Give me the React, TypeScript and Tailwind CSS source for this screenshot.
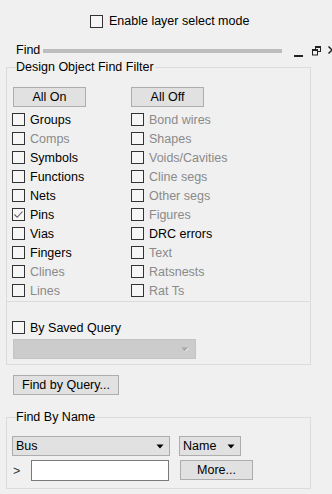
type Item = { label: string; on?: boolean; checked?: boolean };

const left: Item[] = [
  { label: "Groups", on: true },
  { label: "Comps" },
  { label: "Symbols", on: true },
  { label: "Functions", on: true },
  { label: "Nets", on: true },
  { label: "Pins", on: true, checked: true },
  { label: "Vias", on: true },
  { label: "Fingers", on: true },
  { label: "Clines" },
  { label: "Lines" },
];

const right: Item[] = [
  { label: "Bond wires" },
  { label: "Shapes" },
  { label: "Voids/Cavities" },
  { label: "Cline segs" },
  { label: "Other segs" },
  { label: "Figures" },
  { label: "DRC errors", on: true },
  { label: "Text" },
  { label: "Ratsnests" },
  { label: "Rat Ts" },
];

function Box({ on = true, checked = false }: { on?: boolean; checked?: boolean }) {
  return (
    <div
      className={
        "w-[13px] h-[13px] shrink-0 border flex items-center justify-center " +
        (on ? "border-[#333333] bg-[#f6f6f6]" : "border-[#cccccc] bg-[#f0f0f0]")
      }
    >
      {checked && (
        <svg width="11" height="11" viewBox="0 0 11 11">
          <path d="M1.5 5.5 L4.2 8.3 L9.5 2.5" fill="none" stroke="#5a5a5a" strokeWidth="1.1" />
        </svg>
      )}
    </div>
  );
}

function Check({ item }: { item: Item }) {
  return (
    <div className="h-[19px] flex items-center gap-[5px]">
      <Box on={item.on} checked={item.checked} />
      <span className={item.on ? "text-black" : "text-[#8a8a8a]"}>{item.label}</span>
    </div>
  );
}

function Btn({ label, w }: { label: string; w: string }) {
  return (
    <div
      className={
        "h-[20px] border border-[#adadad] bg-[#e1e1e1] flex items-center justify-center " + w
      }
    >
      {label}
    </div>
  );
}

function Arrow({ color = "#000" }: { color?: string }) {
  return (
    <svg width="8" height="5" viewBox="0 0 8 5">
      <path d="M0.5 0.5 H7.5 L4 4.5 Z" fill={color} />
    </svg>
  );
}

export default function App() {
  return (
    <div
      className="w-[332px] h-[494px] bg-[#f0f0f0] overflow-hidden text-[12.5px] leading-[14px] text-black"
      style={{ fontFamily: '"Liberation Sans", Arial, sans-serif' }}
    >
      <div className="mt-[14px] h-[14px] pl-[90px] flex items-center gap-[6px]">
        <Box />
        <span>Enable layer select mode</span>
      </div>

      <div className="mt-[15px] h-[14px] flex items-center pl-[16px]">
        <span className="w-[27px] shrink-0">Find</span>
        <div className="w-[239px] h-[4px] bg-[#bdbdbd] mt-[1px] shrink-0" />
        <div className="ml-[12px] w-[9px] h-[2px] bg-[#222] mt-[12px] shrink-0" />
        <svg className="ml-[9px] mt-[1px] shrink-0" width="9" height="10" viewBox="0 0 9 10">
          <rect x="3.5" y="0.5" width="5" height="5" fill="none" stroke="#222" />
          <rect x="3.5" y="0.5" width="5" height="1.5" fill="#222" />
          <rect x="0.5" y="3.5" width="5" height="5.5" fill="#f0f0f0" stroke="#222" />
          <rect x="0.5" y="3.5" width="5" height="1.5" fill="#222" />
        </svg>
        <svg className="ml-[7px] shrink-0" width="8" height="8" viewBox="0 0 8 8">
          <path d="M0.5 0.5 L7.5 7.5 M7.5 0.5 L0.5 7.5" stroke="#222" strokeWidth="1.5" />
        </svg>
      </div>

      <div className="relative mt-[10px] ml-[6px] w-[305px] border border-[#dcdcdc]">
        <span className="absolute left-[9px] -top-[8px] bg-[#f0f0f0] pr-[1px]">
          Design Object Find Filter
        </span>
        <div className="pt-[19px] pl-[6px] flex gap-[45px]">
          <Btn label="All On" w="w-[73px]" />
          <Btn label="All Off" w="w-[73px]" />
        </div>
        <div className="mt-[3px] pl-[5px] grid grid-cols-[119px_1fr]">
          <div className="flex flex-col">
            {left.map((it) => (
              <Check key={it.label} item={it} />
            ))}
          </div>
          <div className="flex flex-col">
            {right.map((it) => (
              <Check key={it.label} item={it} />
            ))}
          </div>
        </div>
        <div className="mt-[1px] border-t border-[#dcdcdc] pt-[16px] pl-[5px] pb-[5px]">
          <Check item={{ label: "By Saved Query", on: true }} />
          <div className="mt-[2px] ml-[1px] w-[183px] h-[20px] bg-[#cccccc] border border-[#c4c4c4] flex items-center justify-end pr-[6px]">
            <svg width="8" height="5" viewBox="0 0 8 5">
              <path d="M0.5 0.5 H7.5 L4 4.5 Z" fill="#a6a6a6" />
              <path d="M4 4.5 L7.5 1" stroke="#ffffff" strokeWidth="1" />
            </svg>
          </div>
        </div>
      </div>

      <div className="mt-[10px] ml-[13px]">
        <Btn label="Find by Query..." w="w-[106px]" />
      </div>

      <div className="relative mt-[22px] ml-[6px] w-[305px] h-[72px] border border-[#dcdcdc]">
        <span className="absolute left-[9px] -top-[8px] bg-[#f0f0f0] pr-[1px]">Find By Name</span>
        <div className="pt-[18px] pl-[5px] flex gap-[9px]">
          <div className="w-[158px] h-[20px] bg-[#e1e1e1] border border-[#adadad] flex items-center justify-between pl-[3px] pr-[5px]">
            <span>Bus</span>
            <Arrow />
          </div>
          <div className="w-[62px] h-[20px] bg-[#e1e1e1] border border-[#adadad] flex items-center justify-between pl-[3px] pr-[5px]">
            <span>Name</span>
            <Arrow />
          </div>
        </div>
        <div className="mt-[4px] pl-[6px] flex items-center">
          <span className="w-[18px] text-[#333]">&gt;</span>
          <div className="w-[138px] h-[21px] bg-white border border-[#7a7a7a]" />
          <div className="ml-[11px] -mt-[1px]">
            <Btn label="More..." w="w-[73px]" />
          </div>
        </div>
      </div>
    </div>
  );
}
